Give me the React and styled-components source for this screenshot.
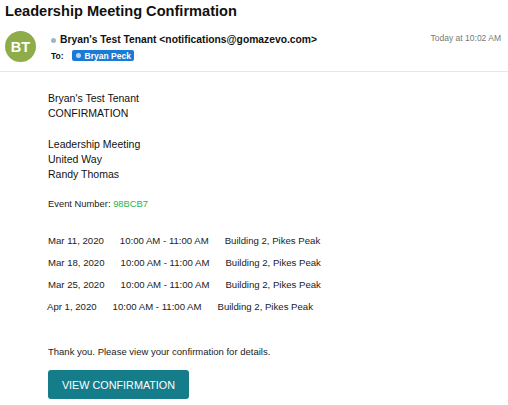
import React from 'react'
import styled, { createGlobalStyle } from 'styled-components'

const GlobalStyle = createGlobalStyle`
  html, body {
    margin: 0;
    padding: 0;
    background: #fff;
  }
  body {
    font-family: "Liberation Sans", Arial, Helvetica, sans-serif;
    color: #111;
  }
`;

const meetings = [
    { date: "Mar 11, 2020", time: "10:00 AM - 11:00 AM", place: "Building 2, Pikes Peak" },
    { date: "Mar 18, 2020", time: "10:00 AM - 11:00 AM", place: "Building 2, Pikes Peak" },
    { date: "Mar 25, 2020", time: "10:00 AM - 11:00 AM", place: "Building 2, Pikes Peak" },
    { date: "Apr 1, 2020", time: "10:00 AM - 11:00 AM", place: "Building 2, Pikes Peak" },
];

function App() {
    return (
        <Page>
            <GlobalStyle />
            <Subject>Leadership Meeting Confirmation</Subject>
            <Header>
                <Avatar>BT</Avatar>
                <Meta>
                    <FromLine>
                        <Dot />
                        Bryan's Test Tenant &lt;notifications@gomazevo.com&gt;
                    </FromLine>
                    <ToLine>
                        <ToLabel>To:</ToLabel>
                        <Badge><Dot light />Bryan Peck</Badge>
                    </ToLine>
                </Meta>
                <Stamp>Today at 10:02 AM</Stamp>
            </Header>
            <Body>
                <Block>
                    <Line>Bryan's Test Tenant</Line>
                    <Line>CONFIRMATION</Line>
                </Block>
                <Block>
                    <Line>Leadership Meeting</Line>
                    <Line>United Way</Line>
                    <Line>Randy Thomas</Line>
                </Block>
                <EventNumber>
                    Event Number: <Code>98BCB7</Code>
                </EventNumber>
                <Schedule>
                    {meetings.map((m) => (
                        <Row key={m.date}>
                            <span>{m.date}</span>
                            <span>{m.time}</span>
                            <span>{m.place}</span>
                        </Row>
                    ))}
                </Schedule>
                <Thanks>Thank you. Please view your confirmation for details.</Thanks>
                <ViewButton>VIEW CONFIRMATION</ViewButton>
            </Body>
        </Page>
    );
}

export default App;

const Page = styled.div`
    width: 508px;
    height: 405px;
    overflow: hidden;
`;
const Subject = styled.h1`
    margin: 0;
    padding: 1px 0 0 5px;
    font-size: 14.6px;
    line-height: 20px;
    font-weight: bold;
    color: #111;
`;
const Header = styled.div`
    display: flex;
    align-items: flex-start;
    padding: 10px 7px 0 5px;
    height: 40px;
    border-bottom: 1px solid #e6e6e6;
`;
const Avatar = styled.div`
    width: 31px;
    height: 31px;
    border-radius: 50%;
    background: #8fac4b;
    color: #fff;
    font-size: 14.5px;
    font-weight: bold;
    display: flex;
    align-items: center;
    justify-content: center;
    flex-shrink: 0;
`;
const Meta = styled.div`
    display: flex;
    flex-direction: column;
    margin-left: 15px;
    flex: 1;
`;
const FromLine = styled.div`
    display: flex;
    align-items: center;
    font-size: 10.3px;
    font-weight: bold;
    line-height: 14px;
    margin-top: 2px;
`;
const Dot = styled.span`
    display: inline-block;
    width: 5px;
    height: 5px;
    border-radius: 50%;
    background: ${(p) => (p.light ? "#b9d6f0" : "#9fb5c3")};
    margin-right: 4px;
`;
const ToLine = styled.div`
    display: flex;
    align-items: center;
    margin-top: 3px;
`;
const ToLabel = styled.span`
    font-size: 8.5px;
    font-weight: bold;
    margin-right: 8px;
`;
const Badge = styled.span`
    display: inline-flex;
    align-items: center;
    background: #1a7bd6;
    color: #fff;
    font-size: 8.5px;
    font-weight: bold;
    height: 11px;
    padding: 0 3px 0 4px;
    border-radius: 2px;
`;
const Stamp = styled.div`
    font-size: 8.5px;
    color: #777;
    line-height: 12px;
    margin-top: 1px;
`;
const Body = styled.div`
    padding: 19px 0 0 48px;
`;
const Block = styled.div`
    margin-bottom: 16px;
`;
const Line = styled.div`
    font-size: 10.5px;
    line-height: 15px;
    color: #111;
`;
const EventNumber = styled.div`
    font-size: 9.4px;
    line-height: 12px;
    margin-top: 4px;
    color: #222;
`;
const Code = styled.span`
    color: #1fb45a;
`;
const Schedule = styled.div`
    margin-top: 20px;
`;
const Row = styled.div`
    display: flex;
    gap: 16px;
    font-size: 9.6px;
    line-height: 22px;
    color: #222;
    &:last-child {
        margin-left: -1px;
    }
`;
const Thanks = styled.div`
    font-size: 9.5px;
    line-height: 12px;
    margin-top: 28px;
    color: #222;
`;
const ViewButton = styled.button`
    display: block;
    margin-top: 12px;
    width: 141px;
    height: 29px;
    padding: 0;
    border: none;
    border-radius: 3px;
    background: #157c8a;
    color: #fff;
    font-family: "Liberation Sans", Arial, sans-serif;
    font-size: 10.8px;
    text-align: center;
`;
